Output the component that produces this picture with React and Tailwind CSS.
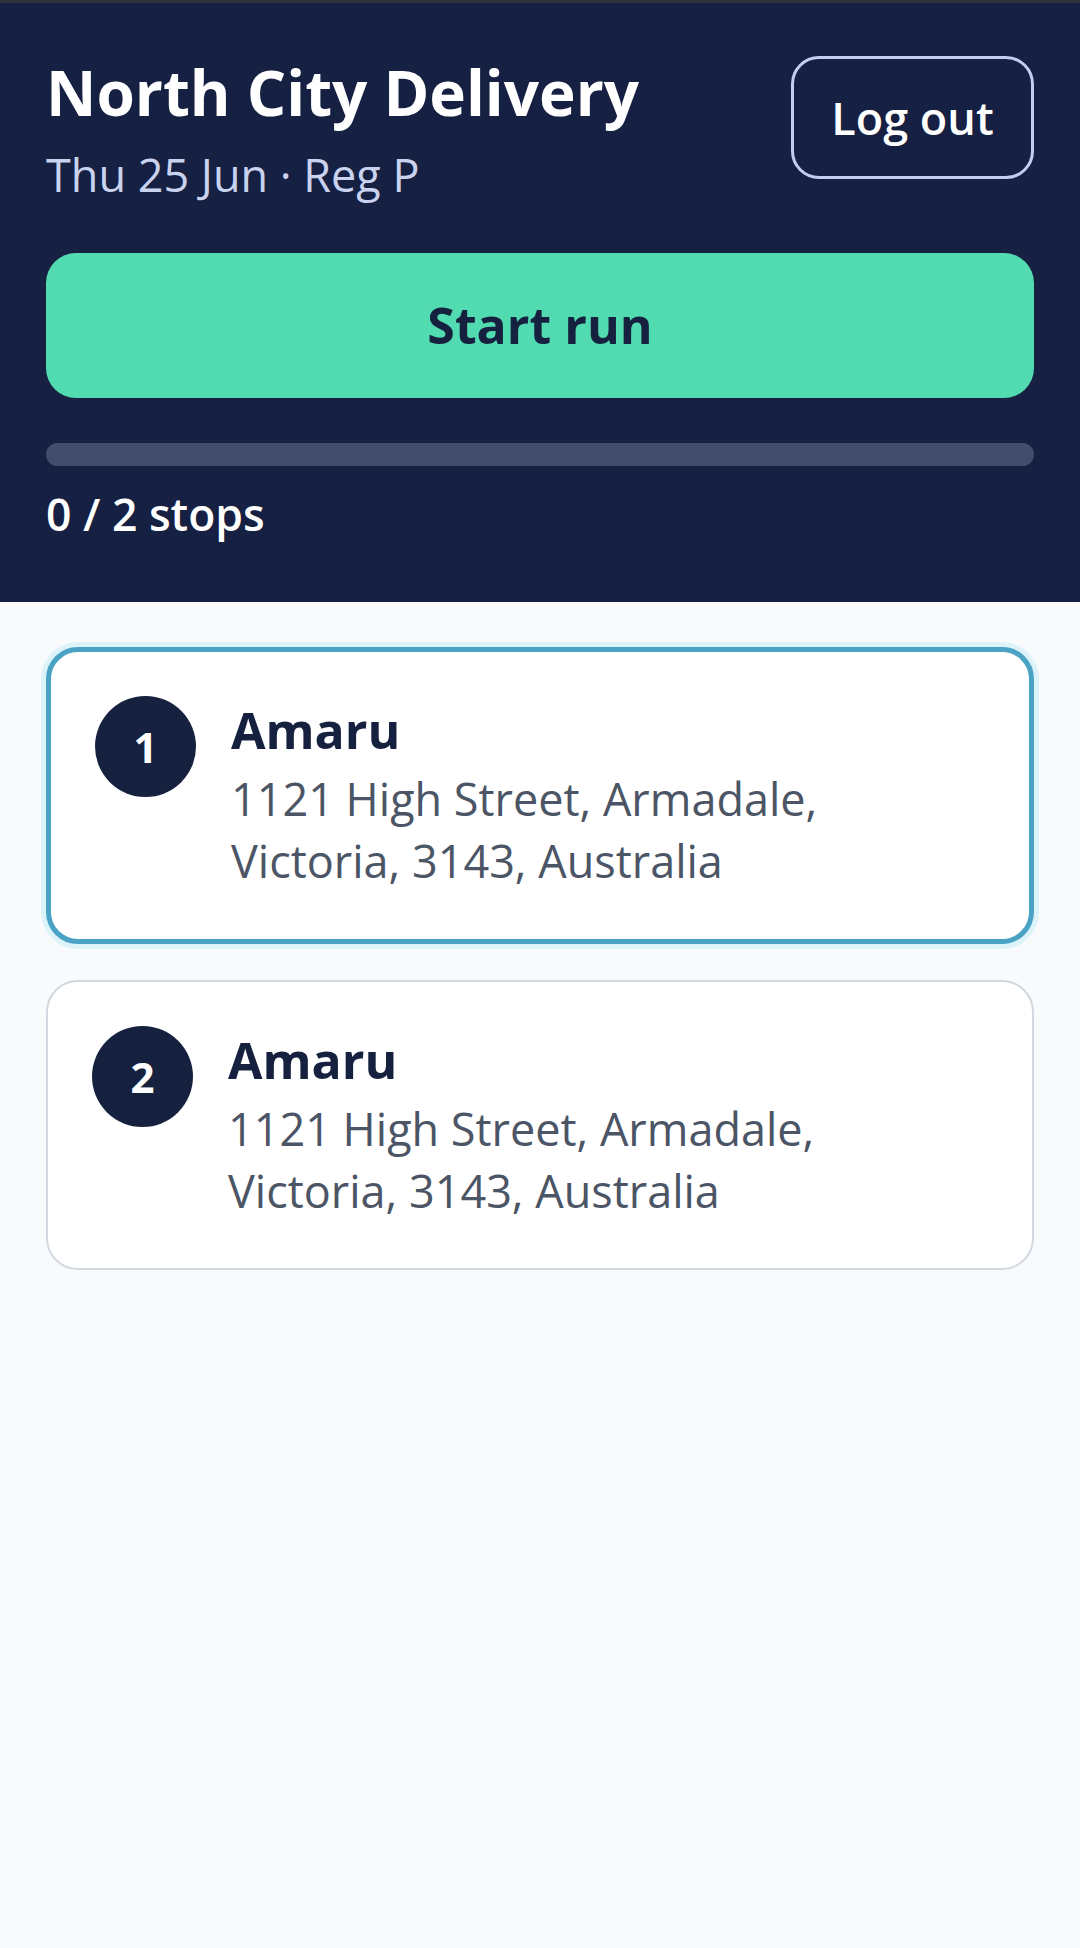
import React from "react";

const stops = [
  { n: 1, name: "Amaru", addr: "1121 High Street, Armadale, Victoria, 3143, Australia", active: true },
  { n: 2, name: "Amaru", addr: "1121 High Street, Armadale, Victoria, 3143, Australia", active: false },
];

function StopCard({ stop }) {
  return (
    <div
      className={
        stop.active
          ? "flex items-start gap-[35px] rounded-[32px] border-[5px] border-[#4aa3c4] bg-white px-[44px] pb-[47px] pt-[44px] shadow-[0_0_0_5px_#dcf3f9]"
          : "flex items-start gap-[35px] rounded-[32px] border-2 border-[#d3d8e0] bg-white px-[44px] pb-[46px] pt-[44px]"
      }
    >
      <div className="flex h-[101px] w-[101px] shrink-0 items-center justify-center rounded-full bg-[#15213f] text-[42px] font-bold leading-none text-white">
        {stop.n}
      </div>
      <div className="flex min-w-0 flex-col">
        <div className="text-[50px] font-bold leading-[68px] text-[#15213f]">{stop.name}</div>
        <div className="mt-[4px] max-w-[640px] text-[45px] leading-[62px] text-[#4b5565]">{stop.addr}</div>
      </div>
    </div>
  );
}

export default function App() {
  return (
    <div
      className="min-h-screen w-full bg-[#f8fafc]"
      style={{ fontFamily: '"Open Sans", "Noto Sans", sans-serif' }}
    >
      <div className="h-[3px] w-full bg-[#2e323c]" />
      <header className="bg-[#152042] px-[46px] pb-[57px] pt-[53px]">
        <div className="flex items-start justify-between">
          <div className="flex flex-col">
            <h1 className="text-[62px] font-bold leading-[73px] text-white">North City Delivery</h1>
            <div className="mt-[14px] text-[45px] leading-[64px] text-[#c9d2ee]">Thu 25 Jun · Reg P</div>
          </div>
          <button className="flex h-[123px] w-[243px] items-center justify-center rounded-[28px] border-[3px] border-[#c3cdf2] text-[45px] font-semibold text-white">
            Log out
          </button>
        </div>
        <button className="mt-[46px] flex h-[145px] w-full items-center justify-center rounded-[30px] bg-[#52dbb0] text-[50px] font-bold text-[#15213f]">
          Start run
        </button>
        <div className="mt-[45px] h-[23px] w-full rounded-full bg-[#444c6b]" />
        <div className="mt-[16px] text-[44.5px] font-semibold leading-[63px] text-white">0 / 2 stops</div>
      </header>
      <main className="flex flex-col gap-[36px] px-[46px] pt-[45px]">
        {stops.map((s) => (
          <StopCard key={s.n} stop={s} />
        ))}
      </main>
    </div>
  );
}
